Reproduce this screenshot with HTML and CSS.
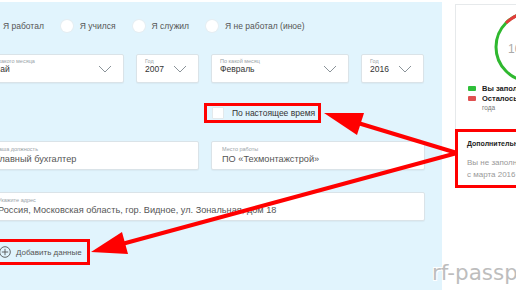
FILE: index.html
```html
<!DOCTYPE html>
<html lang="ru">
<head>
    <meta charset="UTF-8">
    <meta name="viewport" content="width=device-width, initial-scale=1.0">
    <title>Трудовая деятельность</title>
    <link rel="stylesheet" href="styles.css">
</head>
<body>
<div class="page">

    <!-- Форма периода работы -->
    <section class="work-form">
        <div class="form-inner">

            <div class="radio-row">
                <label class="radio"><span class="radio-dot"></span>Я работал</label>
                <label class="radio"><span class="radio-dot"></span>Я учился</label>
                <label class="radio"><span class="radio-dot"></span>Я служил</label>
                <label class="radio"><span class="radio-dot"></span>Я не работал (иное)</label>
            </div>

            <div class="row-dates">
                <div class="field select">
                    <div><span class="field-label">С какого месяца</span><span class="field-value">Май</span></div>
                    <span class="chevron"></span>
                </div>
                <div class="field select">
                    <div><span class="field-label">Год</span><span class="field-value">2007</span></div>
                    <span class="chevron"></span>
                </div>
                <div class="field select">
                    <div><span class="field-label">По какой месяц</span><span class="field-value">Февраль</span></div>
                    <span class="chevron"></span>
                </div>
                <div class="field select">
                    <div><span class="field-label">Год</span><span class="field-value">2016</span></div>
                    <span class="chevron"></span>
                </div>
            </div>

            <div class="now-row">
                <label class="highlight checkbox"><span class="checkbox-box"></span>По настоящее время</label>
            </div>

            <div class="row-job">
                <div class="field text">
                    <span class="field-label">Ваша должность</span>
                    <span class="field-value">Главный бухгалтер</span>
                </div>
                <div class="field text">
                    <span class="field-label">Место работы</span>
                    <span class="field-value">ПО «Техмонтажстрой»</span>
                </div>
            </div>

            <div class="field text address">
                <span class="field-label">Укажите адрес</span>
                <span class="field-value">Россия, Московская область, гор. Видное, ул. Зональная, дом 18</span>
            </div>

            <button class="highlight add-button">
                <svg width="12" height="12" viewBox="0 0 12 12">
                    <circle cx="6" cy="6" r="5.3" fill="none" stroke="#555" stroke-width="0.9"/>
                    <path d="M6 2.8v6.4M2.8 6h6.4" stroke="#555" stroke-width="0.9"/>
                </svg>
                Добавить данные
            </button>

        </div>
    </section>

    <!-- Боковая панель -->
    <aside class="sidebar">
        <div class="card progress-card">
            <svg class="donut" width="150" height="78" viewBox="0 0 150 78">
                <circle cx="62" cy="42" r="34" fill="none" stroke="#2fb82f" stroke-width="3"/>
                <path d="M38 18 A34 34 0 0 1 86 18" fill="none" stroke="#e23b3b" stroke-width="3"/>
                <text x="40" y="48" class="donut-text">10 лет</text>
            </svg>
            <div class="legend">
                <div class="legend-item"><span class="legend-mark green"></span><b>Вы заполнили 10 лет</b></div>
                <div class="legend-item"><span class="legend-mark red"></span><b>Осталось заполнить 1 месяц</b></div>
                <div class="legend-note">года</div>
            </div>
        </div>
        <div class="card info-card">
            <div class="info-title">Дополнительная информация</div>
            <div class="info-text">Вы не заполнили период</div>
            <div class="info-text">с марта 2016 года по настоящее время</div>
        </div>
    </aside>

    <!-- Стрелки-пометки -->
    <svg class="arrows" width="516" height="290" viewBox="0 0 516 290">
        <line x1="457" y1="153" x2="358" y2="123" stroke="#f00" stroke-width="4"/>
        <polygon points="324,113 364,113 357,135" fill="#f00"/>
        <line x1="457" y1="153" x2="122" y2="244" stroke="#f00" stroke-width="4"/>
        <polygon points="91,252 122,232 128,254" fill="#f00"/>
    </svg>

    <div class="watermark">rf-passport.ru</div>
</div>
</body>
</html>
```

FILE: styles.css
```css
html, body {
    margin: 0;
    padding: 0;
    background-color: #fff;
    overflow: hidden;
}

body {
    font-family: "Liberation Sans", Arial, sans-serif;
    color: #333;
}

.page {
    display: flex;
    position: relative;
    width: 516px;
    height: 290px;
    overflow: hidden;
}

/* форма */

.work-form {
    flex: 0 0 442px;
    margin-top: 2px;
    padding-top: 18px;
    background-color: #e1f4fd;
}

.form-inner {
    margin-left: -16px;
}

.radio-row {
    display: flex;
    align-items: center;
    gap: 17px;
    height: 12px;
    font-size: 8.5px;
    color: #555;
}

.radio {
    display: flex;
    align-items: center;
    gap: 7px;
}

.radio-dot {
    width: 12px;
    height: 12px;
    border-radius: 50%;
    background-color: #fff;
    box-shadow: 0 0 0 1px #e6eef2;
}

.field {
    box-sizing: border-box;
    height: 29px;
    background-color: #fff;
    border: 1px solid #dae3e8;
    border-radius: 2px;
    box-shadow: 0 1px 1px rgba(0, 0, 0, 0.04);
}

.field-label {
    display: block;
    font-size: 5.5px;
    line-height: 6px;
    color: #9aa3a8;
}

.field-value {
    display: block;
    white-space: nowrap;
    color: #444;
}

.row-dates {
    display: grid;
    grid-template-columns: 140px 63px 138px 63px;
    column-gap: 12px;
    margin-top: 22px;
}

.select {
    display: flex;
    justify-content: space-between;
    align-items: center;
    padding: 0 12px 0 8px;
}

.select .field-value {
    font-size: 8.5px;
    line-height: 10px;
    color: #333;
}

.select > div {
    align-self: flex-start;
    padding-top: 3px;
}

.chevron {
    width: 12px;
    height: 6px;
    background:
        linear-gradient(to top right, transparent 46%, #8a9399 48%, #8a9399 56%, transparent 58%) left / 50% 100% no-repeat,
        linear-gradient(to top left, transparent 46%, #8a9399 48%, #8a9399 56%, transparent 58%) right / 50% 100% no-repeat;
}

.highlight {
    box-sizing: border-box;
    display: flex;
    align-items: center;
    border: 3px solid #f00;
    background: transparent;
    font-family: "Liberation Sans", Arial, sans-serif;
}

.now-row {
    display: flex;
    margin-top: 20px;
    padding-left: 220px;
}

.checkbox {
    height: 20px;
    width: 117px;
    padding-left: 5px;
    gap: 8px;
    font-size: 8.5px;
    color: #333;
}

.checkbox-box {
    width: 10px;
    height: 10px;
    background-color: #fff;
    border: 1px solid #e3e9ec;
    border-radius: 1px;
}

.row-job {
    display: grid;
    grid-template-columns: 215px 214px;
    column-gap: 12px;
    margin-top: 18px;
}

.text {
    padding: 4px 8px 0 10px;
}

.text .field-value {
    font-size: 9.2px;
    line-height: 12px;
    margin-top: 1px;
    color: #555;
}

.address {
    width: 441px;
    margin-top: 22px;
    padding-left: 13px;
}

.add-button {
    height: 26px;
    width: 98px;
    margin: 18px 0 0 8px;
    padding: 0 0 0 4px;
    gap: 5px;
    font-size: 8px;
    color: #555;
}

.add-button svg {
    flex: none;
}

/* боковая панель */

.sidebar {
    flex: 0 0 230px;
    padding: 4px 0 0 13px;
    background-color: #fff;
}

.card {
    box-sizing: border-box;
    width: 200px;
    background-color: #fff;
}

.progress-card {
    height: 125px;
    padding: 0 12px;
    border: 1px solid #e6e9eb;
    border-bottom: none;
}

.donut {
    display: block;
}

.donut-text {
    font-family: "Liberation Sans", Arial, sans-serif;
    font-size: 12px;
    fill: #aaa;
}

.legend {
    font-size: 7.5px;
    color: #222;
}

.legend-item {
    display: flex;
    align-items: center;
    gap: 6px;
    height: 10px;
    white-space: nowrap;
}

.legend-mark {
    width: 8px;
    height: 5px;
    border-radius: 1px;
}

.legend-mark.green {
    background-color: #2fbf3a;
}

.legend-mark.red {
    background-color: #e05050;
}

.legend-note {
    padding-left: 14px;
    line-height: 10px;
    font-size: 6.5px;
    color: #777;
}

.info-card {
    height: 59px;
    padding: 7px 0 0 9px;
    border: 3px solid #f00;
}

.info-title {
    font-size: 7px;
    line-height: 10px;
    font-weight: bold;
    color: #222;
    white-space: nowrap;
}

.info-text {
    font-size: 8px;
    line-height: 12px;
    color: #999;
    white-space: nowrap;
}

.info-title + .info-text {
    margin-top: 8px;
}

/* пометки поверх */

.arrows {
    position: absolute;
    top: 0;
    left: 0;
    pointer-events: none;
}

.watermark {
    position: absolute;
    left: 432px;
    top: 260px;
    font-family: "DejaVu Sans", sans-serif;
    font-size: 21.5px;
    color: #bdbdbd;
    white-space: nowrap;
    text-shadow: 1px 1px 0 #fff, -1px -1px 0 #fff, 1px -1px 0 #fff, -1px 1px 0 #fff;
}
```
